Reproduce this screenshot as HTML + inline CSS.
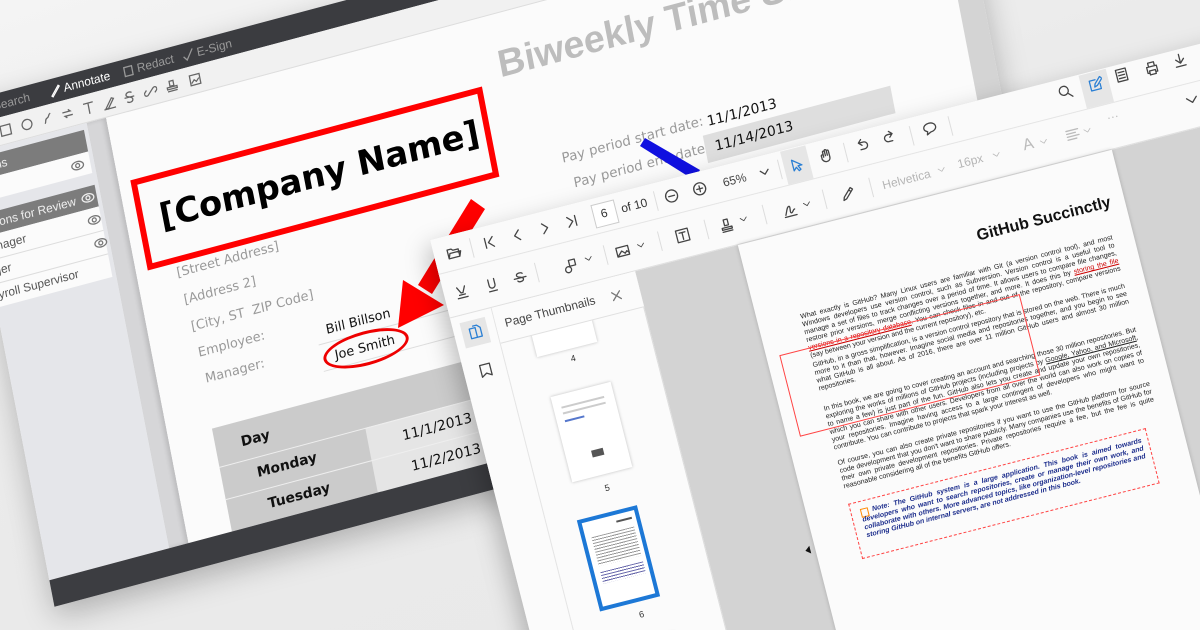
<!DOCTYPE html>
<html><head><meta charset="utf-8"><style>
*{margin:0;padding:0;box-sizing:border-box}
html,body{width:1200px;height:630px;overflow:hidden}
body{background:linear-gradient(160deg,#f4f4f4 0%,#ebebeb 40%,#e8e8e8 100%);position:relative;font-family:"Liberation Sans",sans-serif}
#wrap{position:absolute;left:0;top:0;width:1200px;height:630px;overflow:hidden}
.abs{position:absolute}
#back{position:absolute;left:0;top:0;width:1030px;height:513px;transform-origin:0 0;transform:matrix(0.966,-0.258,0.19,0.98,-43,104);box-shadow:0 10px 30px rgba(0,0,0,.25);background:#fbfbfb}
#front{position:absolute;left:0;top:0;width:900px;height:640px;transform-origin:0 0;transform:matrix(0.969,-0.247,0.247,0.969,430,240);box-shadow:-6px 8px 24px rgba(0,0,0,.25);background:#d3d3d3}
.ic{position:absolute;width:16px;height:16px;fill:none;stroke:#444;stroke-width:1.3;stroke-linecap:round;stroke-linejoin:round}
.bi{position:absolute;width:14px;height:14px;fill:none;stroke:#666;stroke-width:1.3}
.t{position:absolute;white-space:nowrap}
.dv{font-family:"DejaVu Sans",sans-serif}
.p{position:absolute;left:340px;width:322px;font-size:7px;line-height:8px;color:#222;text-align:justify}
.sep{position:absolute;width:1px;background:#ddd}
</style></head><body><div id="wrap">

<div id="back">
  <div class="abs" style="left:0;top:0;width:1030px;height:24px;background:#3b3c40"></div>
  <div class="t" style="left:35px;top:5px;font-size:12px;color:#9a9a9a">Search</div>
  <svg class="bi" style="left:92px;top:5px;stroke:#fff" viewBox="0 0 14 14"><path d="M3 12l8-9 1 1-8 9z"/></svg>
  <div class="t" style="left:108px;top:5px;font-size:12px;color:#fff">Annotate</div>
  <svg class="bi" style="left:168px;top:5px;stroke:#999" viewBox="0 0 14 14"><rect x="3" y="3" width="8" height="9"/></svg>
  <div class="t" style="left:184px;top:5px;font-size:12px;color:#9a9a9a">Redact</div>
  <svg class="bi" style="left:230px;top:5px;stroke:#999" viewBox="0 0 14 14"><path d="M2 8l3 4 7-10"/></svg>
  <div class="t" style="left:246px;top:5px;font-size:12px;color:#9a9a9a">E-Sign</div>
  <div class="abs" style="left:0;top:24px;width:1030px;height:28px;background:#f1f1f1;border-bottom:1px solid #ddd"></div>
  <svg class="bi" style="left:4px;top:31px" viewBox="0 0 14 14"><path d="M3 5l4 4 4-4"/></svg>
  <svg class="bi" style="left:36px;top:31px" viewBox="0 0 14 14"><rect x="2" y="2" width="10" height="10"/></svg>
  <svg class="bi" style="left:58px;top:31px" viewBox="0 0 14 14"><circle cx="7" cy="7" r="5"/></svg>
  <svg class="bi" style="left:80px;top:31px" viewBox="0 0 14 14"><path d="M3 11c2-2 0-4 3-5s1-3 4-4"/></svg>
  <svg class="bi" style="left:100px;top:31px" viewBox="0 0 14 14"><path d="M2 5h8l-2-2M12 9H4l2 2"/></svg>
  <svg class="bi" style="left:122px;top:31px" viewBox="0 0 14 14"><path d="M2 2h10M7 2v11"/></svg>
  <svg class="bi" style="left:143px;top:31px" viewBox="0 0 14 14"><path d="M3 12l7-9 2 1-7 9zM1 13h12"/></svg>
  <svg class="bi" style="left:164px;top:31px" viewBox="0 0 14 14"><path d="M10 3C8 1 4 2 4 4.5s6 2 6 5S6 13 4 11M2 7h10"/></svg>
  <svg class="bi" style="left:186px;top:31px" viewBox="0 0 14 14"><path d="M6 8l-2 2a2 2 0 01-3-3l2-2M8 6l2-2a2 2 0 013 3l-2 2M5 9l4-4"/></svg>
  <svg class="bi" style="left:208px;top:31px" viewBox="0 0 14 14"><path d="M5 2h4v5H5zM2 8h10v2H2zM2 12h10"/></svg>
  <svg class="bi" style="left:232px;top:31px" viewBox="0 0 14 14"><rect x="2" y="2" width="10" height="10"/><path d="M3 10l3-3 2 2 3-3"/></svg>
  <div class="abs" style="left:0;top:52px;width:124px;height:434px;background:#e5e6ea"></div>
  <div class="abs" style="left:0;top:58px;width:120px;height:22px;background:#7c7c7c"></div>
  <div class="t" style="left:-25px;top:62px;font-size:12px;color:#eee">Annotations</div>
  <div class="abs" style="left:0;top:80px;width:120px;height:22px;background:#fbfbfb"></div>
  <div class="abs" style="left:0;top:114px;width:120px;height:22px;background:#7c7c7c"></div>
  <div class="t" style="left:-25px;top:118px;font-size:12px;color:#eee">Annotations for Review</div>
  <div class="abs" style="left:0;top:136px;width:120px;height:72px;background:#fbfbfb"></div>
  <div class="abs" style="left:0;top:160px;width:120px;height:1px;background:#ddd"></div>
  <div class="abs" style="left:0;top:184px;width:120px;height:1px;background:#ddd"></div>
  <div class="t" style="left:-5px;top:141px;font-size:12px;color:#555">Manager</div>
  <div class="t" style="left:-25px;top:165px;font-size:12px;color:#555">Manager</div>
  <div class="t" style="left:-10px;top:189px;font-size:12px;color:#555">Payroll Supervisor</div>
  <svg class="bi" style="left:100px;top:84px;stroke:#777" viewBox="0 0 14 14"><ellipse cx="7" cy="7" rx="6" ry="4"/><circle cx="7" cy="7" r="2"/></svg>
  <svg class="bi" style="left:104px;top:118px;stroke:#eee" viewBox="0 0 14 14"><ellipse cx="7" cy="7" rx="6" ry="4"/><circle cx="7" cy="7" r="2"/></svg>
  <svg class="bi" style="left:106px;top:141px;stroke:#777" viewBox="0 0 14 14"><ellipse cx="7" cy="7" rx="6" ry="4"/><circle cx="7" cy="7" r="2"/></svg>
  <svg class="bi" style="left:108px;top:165px;stroke:#777" viewBox="0 0 14 14"><ellipse cx="7" cy="7" rx="6" ry="4"/><circle cx="7" cy="7" r="2"/></svg>
  <div class="abs" style="left:124px;top:52px;width:20px;height:434px;background:#d6d6d8;box-shadow:inset -3px 0 4px rgba(0,0,0,.12)"></div>
  <div class="abs" style="left:1005px;top:52px;width:25px;height:434px;background:#d4d4d4"></div>
  <div class="t" style="left:540px;top:82px;font-size:38px;font-weight:bold;color:#bdbdbd">Biweekly Time Sheet</div>
  <div class="abs" style="left:156px;top:119px;width:364px;height:92px;border:6px solid #f00"></div>
  <div class="t dv" style="left:178px;top:143px;font-size:34px;font-weight:bold;color:#000">[Company Name]</div>
  <div class="t dv" style="left:184px;top:214px;font-size:13px;color:#9a9a9a">[Street Address]</div>
  <div class="t dv" style="left:186px;top:242px;font-size:13px;color:#9a9a9a">[Address 2]</div>
  <div class="t dv" style="left:188px;top:270px;font-size:13px;color:#9a9a9a">[City, ST&nbsp; ZIP Code]</div>
  <div class="t dv" style="left:190px;top:297px;font-size:13px;color:#999">Employee:</div>
  <div class="t dv" style="left:192px;top:324px;font-size:13px;color:#999">Manager:</div>
  <div class="abs" style="left:310px;top:327px;width:180px;height:1px;background:#ddd"></div>
  <div class="abs" style="left:310px;top:354px;width:180px;height:1px;background:#ddd"></div>
  <div class="t dv" style="left:320px;top:308px;font-size:13px;color:#111">Bill Billson</div>
  <div class="t dv" style="left:324px;top:335px;font-size:13px;color:#111">Joe Smith</div>
  <div class="abs" style="left:312px;top:326px;width:88px;height:34px;border:3px solid #e00;border-radius:50%"></div>
  <div class="t dv" style="left:585px;top:202px;font-size:13.5px;color:#999">Pay period start date:</div>
  <div class="t dv" style="left:592px;top:229px;font-size:13.5px;color:#999">Pay period end date:</div>
  <div class="abs" style="left:728px;top:224px;width:194px;height:28px;background:#dedede"></div>
  <div class="t dv" style="left:735px;top:204px;font-size:14px;color:#111">11/1/2013</div>
  <div class="t dv" style="left:738px;top:230px;font-size:14px;color:#111">11/14/2013</div>
  <div class="abs" style="left:189px;top:381px;width:310px;height:105px;background:#cbcbcb"></div>
  <div class="abs" style="left:340px;top:420px;width:160px;height:66px;background:#e5e5e5"></div>
  <div class="abs" style="left:189px;top:420px;width:311px;height:1px;background:#eee"></div>
  <div class="abs" style="left:189px;top:453px;width:311px;height:1px;background:#eee"></div>
  <div class="t dv" style="left:215px;top:394px;font-size:14px;font-weight:bold;color:#111">Day</div>
  <div class="t dv" style="left:225px;top:428px;font-size:14px;font-weight:bold;color:#111">Monday</div>
  <div class="t dv" style="left:230px;top:461px;font-size:14px;font-weight:bold;color:#111">Tuesday</div>
  <div class="t dv" style="left:375px;top:430px;font-size:14px;color:#111">11/1/2013</div>
  <div class="t dv" style="left:378px;top:462px;font-size:14px;color:#111">11/2/2013</div>
  <div class="abs" style="left:0;top:486px;width:1030px;height:27px;background:#3c3d41"></div>
</div>

<svg class="abs" style="left:0;top:0" width="1200" height="630">
  <polygon points="471,199 485,209 432,294 418,285" fill="#f00"/>
  <polygon points="398,328 403,280 444,305" fill="#f00"/>
  <polygon points="640,146 645,138 700,170 694,180" fill="#1010e0"/>
</svg>

<div id="front">
  <div class="abs" style="left:0;top:0;width:900px;height:36px;background:#fafafa;border-bottom:1px solid #e4e4e4"></div>
  <div class="abs" style="left:0;top:36px;width:900px;height:45px;background:#fafafa;border-bottom:1px solid #e0e0e0"></div>
  <div class="abs" style="left:361px;top:1px;width:26px;height:34px;background:#e6e6e6"></div>
  <div class="abs" style="left:669px;top:1px;width:28px;height:34px;background:#e6e6e6"></div>
  <div class="sep" style="left:38px;top:8px;height:20px"></div>
  <div class="sep" style="left:228px;top:8px;height:20px"></div>
  <div class="sep" style="left:356px;top:8px;height:20px"></div>
  <div class="sep" style="left:424px;top:8px;height:20px"></div>
  <div class="sep" style="left:492px;top:8px;height:20px"></div>
  <div class="sep" style="left:532px;top:8px;height:20px"></div>
  <div class="sep" style="left:95px;top:48px;height:20px"></div>
  <div class="sep" style="left:166px;top:48px;height:20px"></div>
  <div class="sep" style="left:222px;top:48px;height:20px"></div>
  <div class="sep" style="left:270px;top:48px;height:20px"></div>
  <div class="sep" style="left:330px;top:48px;height:20px"></div>
  <div class="sep" style="left:392px;top:48px;height:20px"></div>
  <div class="sep" style="left:440px;top:48px;height:20px"></div>
  <svg class="ic" style="left:12px;top:10px" viewBox="0 0 16 16"><path d="M2 4h4l1.5 1.5H13v7.5H2zM2 13l2-5h11l-2 5"/></svg>
  <svg class="ic" style="left:49px;top:9px" viewBox="0 0 16 16"><path d="M4 3v10M12 3l-5 5 5 5"/></svg>
  <svg class="ic" style="left:78px;top:9px" viewBox="0 0 16 16"><path d="M10 3l-5 5 5 5"/></svg>
  <svg class="ic" style="left:106px;top:9px" viewBox="0 0 16 16"><path d="M6 3l5 5-5 5"/></svg>
  <svg class="ic" style="left:134px;top:9px" viewBox="0 0 16 16"><path d="M4 3l5 5-5 5M12 3v10"/></svg>
  <div class="abs" style="left:164px;top:6px;width:24px;height:24px;border:1px solid #ccc;background:#fff"></div>
  <div class="t" style="left:172px;top:10px;font-size:12px;color:#333">6</div>
  <div class="t" style="left:193px;top:10px;font-size:12px;color:#333">of 10</div>
  <svg class="ic" style="left:237px;top:9px" viewBox="0 0 16 16"><circle cx="8" cy="8" r="6"/><path d="M5 8h6"/></svg>
  <svg class="ic" style="left:266px;top:9px" viewBox="0 0 16 16"><circle cx="8" cy="8" r="6"/><path d="M5 8h6M8 5v6"/></svg>
  <div class="t" style="left:298px;top:10px;font-size:12px;color:#444">65%</div>
  <svg class="ic" style="left:333px;top:9px" viewBox="0 0 16 16"><path d="M4 6l4 4 4-4"/></svg>
  <svg class="ic" style="left:366px;top:10px;stroke:#2a7fd4" viewBox="0 0 16 16"><path d="M4 2v11l3-3 2 4 2-1-2-4h4z"/></svg>
  <svg class="ic" style="left:397px;top:8px" viewBox="0 0 16 16"><path d="M5 9V4a1 1 0 012 0v4V3a1 1 0 012 0v5V4a1 1 0 012 0v6c0 3-2 4-4 4s-3-1-4-3L3 8a1 1 0 012-1z"/></svg>
  <svg class="ic" style="left:434px;top:7px" viewBox="0 0 16 16"><path d="M5 5h5a3 3 0 010 7H6M5 5l3-3M5 5l3 3"/></svg>
  <svg class="ic" style="left:463px;top:6px" viewBox="0 0 16 16"><path d="M11 5H6a3 3 0 000 7h4M11 5L8 2M11 5L8 8"/></svg>
  <svg class="ic" style="left:504px;top:7px" viewBox="0 0 16 16"><path d="M8 3c3.5 0 6 2 6 4.5S11.5 12 8 12l-4 2 1-3c-2-1-3-2-3-3.5C2 5 4.5 3 8 3z"/></svg>
  <svg class="ic" style="left:644px;top:5px" viewBox="0 0 16 16"><circle cx="7" cy="7" r="4.5"/><path d="M10.5 10.5l4 4"/></svg>
  <svg class="ic" style="left:675px;top:6px;stroke:#2a7fd4" viewBox="0 0 16 16"><path d="M3 3h6M3 3v10h10V8M7 10l1-3 6-6 2 2-6 6z"/></svg>
  <svg class="ic" style="left:703px;top:3px" viewBox="0 0 16 16"><rect x="3" y="2" width="10" height="12"/><path d="M5 5h6M5 8h6M5 11h6"/></svg>
  <svg class="ic" style="left:734px;top:4px" viewBox="0 0 16 16"><path d="M5 6V2h6v4M3 6h10v6h-2M5 12H3V6M5 10h6v4H5z"/></svg>
  <svg class="ic" style="left:763px;top:3px" viewBox="0 0 16 16"><path d="M8 2v9M4 7l4 4 4-4M3 14h10"/></svg>
  <svg class="ic" style="left:10px;top:50px" viewBox="0 0 16 16"><path d="M4 3l3 6h2l3-6M5 11h6M3 14h10"/></svg>
  <svg class="ic" style="left:41px;top:51px" viewBox="0 0 16 16"><path d="M5 2v6a3 3 0 006 0V2M4 14h8"/></svg>
  <svg class="ic" style="left:70px;top:51px" viewBox="0 0 16 16"><path d="M11 4c-1-1.5-6-1.5-6 1s6 2 6 4.5-5 3-6 1M2 8h12"/></svg>
  <svg class="ic" style="left:122px;top:52px" viewBox="0 0 16 16"><circle cx="5" cy="11" r="3"/><rect x="7" y="2" width="6" height="6"/></svg>
  <svg class="ic" style="left:144px;top:52px;width:10px;height:10px" viewBox="0 0 16 16"><path d="M3 6l5 5 5-5"/></svg>
  <svg class="ic" style="left:176px;top:50px" viewBox="0 0 16 16"><rect x="2" y="4" width="12" height="9"/><path d="M3 12l4-4 3 3 2-2 2 2"/></svg>
  <svg class="ic" style="left:198px;top:52px;width:10px;height:10px" viewBox="0 0 16 16"><path d="M3 6l5 5 5-5"/></svg>
  <svg class="ic" style="left:238px;top:50px" viewBox="0 0 16 16"><rect x="2" y="2" width="12" height="12"/><path d="M5 5h6M8 5v7"/></svg>
  <svg class="ic" style="left:283px;top:51px" viewBox="0 0 16 16"><path d="M6 2h4v6H6zM3 10h10v2H3zM3 14h10"/></svg>
  <svg class="ic" style="left:304px;top:52px;width:10px;height:10px" viewBox="0 0 16 16"><path d="M3 6l5 5 5-5"/></svg>
  <svg class="ic" style="left:348px;top:52px" viewBox="0 0 16 16"><path d="M3 12c2-4 3-8 5-8s-1 7 1 7 2-3 4-3M2 14h12"/></svg>
  <svg class="ic" style="left:369px;top:53px;width:10px;height:10px" viewBox="0 0 16 16"><path d="M3 6l5 5 5-5"/></svg>
  <svg class="ic" style="left:408px;top:51px" viewBox="0 0 16 16"><path d="M3 13l1-3 8-8 2 2-8 8zM10 4l2 2"/></svg>
  <div class="t" style="left:452px;top:52px;font-size:12px;color:#b5b5b5">Helvetica</div>
  <svg class="ic" style="left:508px;top:53px;width:10px;height:10px;stroke:#bbb" viewBox="0 0 16 16"><path d="M3 6l5 5 5-5"/></svg>
  <div class="t" style="left:530px;top:50px;font-size:12px;color:#b5b5b5">16px</div>
  <svg class="ic" style="left:565px;top:52px;width:10px;height:10px;stroke:#bbb" viewBox="0 0 16 16"><path d="M3 6l5 5 5-5"/></svg>
  <div class="t" style="left:598px;top:47px;font-size:16px;color:#bbb">A</div>
  <svg class="ic" style="left:614px;top:51px;width:10px;height:10px;stroke:#bbb" viewBox="0 0 16 16"><path d="M3 6l5 5 5-5"/></svg>
  <svg class="ic" style="left:641px;top:49px;stroke:#bbb" viewBox="0 0 16 16"><path d="M2 3h12M2 6h9M2 9h12M2 12h9"/></svg>
  <svg class="ic" style="left:659px;top:51px;width:10px;height:10px;stroke:#bbb" viewBox="0 0 16 16"><path d="M3 6l5 5 5-5"/></svg>
  <div class="t" style="left:686px;top:42px;font-size:12px;color:#bbb">···</div>
  <svg class="ic" style="left:765px;top:44px" viewBox="0 0 16 16"><path d="M3 6l5 5 5-5"/></svg>
  <div class="abs" style="left:0;top:81px;width:43px;height:560px;background:#fbfbfb;border-right:1px solid #e4e4e4"></div>
  <div class="abs" style="left:8px;top:88px;width:26px;height:26px;background:#e6e6e6"></div>
  <svg class="ic" style="left:13px;top:93px;stroke:#2a7fd4" viewBox="0 0 16 16"><path d="M3 3h6v10H3zM7 1h4l3 3v9H9"/></svg>
  <svg class="ic" style="left:14px;top:132px" viewBox="0 0 16 16"><path d="M3 2h10v12l-5-3-5 3z"/></svg>
  <div class="abs" style="left:43px;top:81px;width:148px;height:560px;background:#fbfbfb;border-right:1px solid #ddd"></div>
  <div class="abs" style="left:75px;top:100px;width:62px;height:40px;background:#fff;box-shadow:0 0 3px rgba(0,0,0,.25)"></div>
  <div class="abs" style="left:43px;top:81px;width:148px;height:37px;background:#fbfbfb;border-bottom:1px solid #e0e0e0"></div>
  <div class="t" style="left:52px;top:92px;font-size:12px;color:#444">Page Thumbnails</div>
  <svg class="ic" style="left:159px;top:92px;stroke:#777" viewBox="0 0 16 16"><path d="M4 4l8 8M12 4l-8 8"/></svg>
  <div class="t" style="left:107px;top:145px;font-size:9px;color:#333">4</div>
  <div class="abs" style="left:78px;top:182px;width:62px;height:88px;background:#fff;box-shadow:0 0 3px rgba(0,0,0,.25)">
    <div class="abs" style="left:8px;top:12px;width:44px;height:2px;background:#ccc"></div>
    <div class="abs" style="left:8px;top:18px;width:44px;height:2px;background:#ccc"></div>
    <div class="abs" style="left:8px;top:26px;width:20px;height:2px;background:#57c"></div>
    <div class="abs" style="left:26px;top:62px;width:12px;height:7px;background:#555"></div>
  </div>
  <div class="t" style="left:108px;top:279px;font-size:9px;color:#333">5</div>
  <div class="abs" style="left:73px;top:308px;width:62px;height:94px;border:4px solid #1d78d6;background:#fff">
    <div class="abs" style="left:34px;top:6px;width:16px;height:2px;background:#555"></div>
    <div class="abs" style="left:6px;top:16px;width:44px;height:30px;background:repeating-linear-gradient(#999 0 1px,transparent 1px 3px)"></div>
    <div class="abs" style="left:6px;top:52px;width:44px;height:12px;background:repeating-linear-gradient(#66a 0 1px,transparent 1px 3px)"></div>
  </div>
  <div class="t" style="left:110px;top:410px;font-size:9px;color:#333">6</div>
  <div class="abs" style="left:78px;top:440px;width:62px;height:90px;background:#fff;box-shadow:0 0 3px rgba(0,0,0,.25)"></div>
  <div class="abs" style="left:297px;top:81px;width:386px;height:560px;background:#fbfbfb;box-shadow:0 0 4px rgba(0,0,0,.2)"></div>
  <div class="t" style="left:531px;top:123px;font-size:16px;font-weight:bold;color:#111">GitHub Succinctly</div>
  <div class="p" style="top:163px">What exactly is GitHub? Many Linux users are familiar with Git (a version control tool), and most Windows developers use version control, such as Subversion. Version control is a useful tool to manage a set of files to track changes over a period of time. It allows users to compare file changes, restore prior versions, merge conflicting versions together, and more. It does this by <u style="color:#c00">storing the file versions in a repository database</u>. You can check files in and out of the repository, compare versions (say between your version and the current repository), etc.</div>
  <div class="p" style="top:213px">GitHub, in a gross simplification, is a version control repository that is stored on the web. There is much more to it than that, however. Imagine social media and repositories together, and you begin to see what GitHub is all about. As of 2016, there are over 11 million GitHub users and almost 30 million repositories.</div>
  <div class="p" style="top:258px">In this book, we are going to cover creating an account and searching those 30 million repositories. But exploring the works of millions of GitHub projects (including projects by <u>Google, Yahoo, and Microsoft</u>, to name a few) is just part of the fun. GitHub also lets you create and update your own repositories, which you can share with other users. Developers from all over the world can also work on copies of your repositories. Imagine having access to a large contingent of developers who might want to contribute. You can contribute to projects that spark your interest as well.</div>
  <div class="p" style="top:314px">Of course, you can also create private repositories if you want to use the GitHub platform for source code development that you don't want to share publicly. Many companies use the benefits of GitHub for their own private development repositories. Private repositories require a fee, but the fee is quite reasonable considering all of the benefits GitHub offers.</div>
  <div class="abs" style="left:310px;top:198px;width:248px;height:84px;border:1px solid #f44"></div>
  <div class="abs" style="left:340px;top:359px;width:307px;height:57px;border:1px dashed #f44"></div>
  <div class="abs" style="left:350px;top:367px;width:8px;height:9px;border:1px solid #f80"></div>
  <div class="p" style="top:367px;left:350px;width:290px;color:#1c2d8c;font-weight:bold;font-style:italic;text-indent:12px">Note: The GitHub system is a large application. This book is aimed towards developers who want to search repositories, create or manage their own work, and collaborate with others. More advanced topics, like organization-level repositories and storing GitHub on internal servers, are not addressed in this book.</div>
  <div class="abs" style="left:287px;top:390px;width:0;height:0;border:4px solid transparent;border-right:5px solid #111;border-left:0"></div>
</div>
</div></body></html>
